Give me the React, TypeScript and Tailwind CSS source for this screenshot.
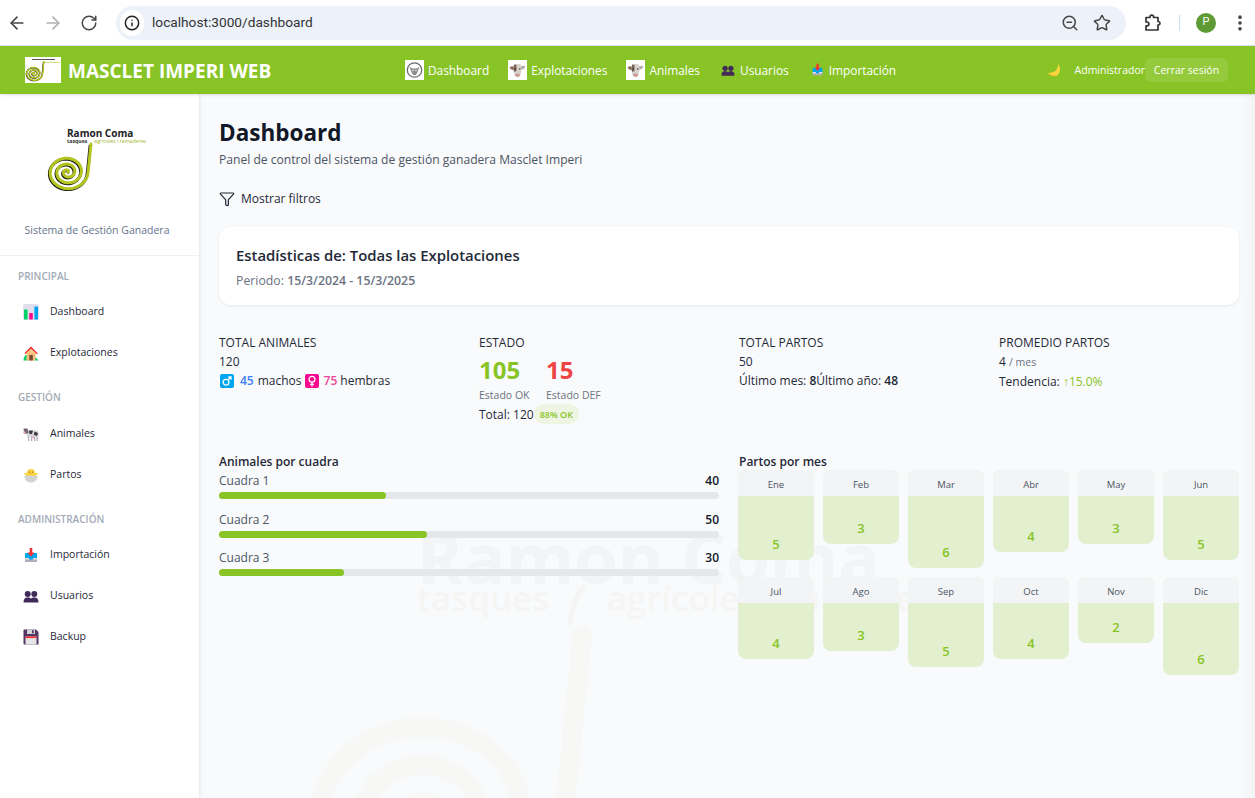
import { ArrowLeft, ArrowRight, EllipsisVertical, Funnel, Info, RotateCw, Star, ZoomOut } from "lucide-react";

const FONT = "font-['Open_Sans','Noto_Sans',sans-serif]";

const MONTHS = [
  { name: "Ene", value: 5 },
  { name: "Feb", value: 3 },
  { name: "Mar", value: 6 },
  { name: "Abr", value: 4 },
  { name: "May", value: 3 },
  { name: "Jun", value: 5 },
  { name: "Jul", value: 4 },
  { name: "Ago", value: 3 },
  { name: "Sep", value: 5 },
  { name: "Oct", value: 4 },
  { name: "Nov", value: 2 },
  { name: "Dic", value: 6 },
];

const CUADRAS = [
  { name: "Cuadra 1", value: 40 },
  { name: "Cuadra 2", value: 50 },
  { name: "Cuadra 3", value: 30 },
];

// spiral winding outwards, ends on the right side and runs up the stem
function spiralPath() {
  const points: string[] = [];
  for (let i = 0; i <= 150; i++) {
    const angle = (i / 150) * Math.PI * 6;
    const r = 0.6 + (i / 150) * 20;
    points.push(`${(21.5 + r * Math.cos(angle)).toFixed(2)} ${(31 - r * 0.88 * Math.sin(angle)).toFixed(2)}`);
  }
  return `M${points.join(" L")} C43 24 44 12 45 3`;
}

const SPIRAL = spiralPath();

function Spiral({ className, shadow, stroke = 3 }: { className: string; shadow?: boolean; stroke?: number }) {
  return (
    <svg viewBox="0 0 50 56" fill="none" className={className}>
      {shadow && <path d={SPIRAL} stroke="#1a1a14" strokeWidth={stroke} transform="translate(-0.8 0.9)" />}
      <path d={SPIRAL} stroke="#b4c522" strokeWidth={stroke} strokeLinecap="round" />
    </svg>
  );
}

function LogoSmall() {
  return (
    <div className="relative h-[26px] w-[36px] bg-white">
      <div className="absolute top-[2px] left-[7px] h-[1px] w-[23px] bg-[#555]" />
      <div className="absolute top-[5px] left-[18px] h-[1px] w-[17px] bg-[#d3dc80]" />
      <Spiral className="absolute top-[3px] left-0 h-[24px] w-[21px]" shadow stroke={3.4} />
    </div>
  );
}

function CowHead() {
  return (
    <svg viewBox="0 0 19 20" className="h-[20px] w-[19px] bg-white">
      <path d="M1.5 7.5 Q4 5.5 6 7 L6 10 Q3 10.5 1.5 7.5 Z" fill="#8a6f60" />
      <path d="M17.5 6.5 Q15 5 13 6.5 L13 9.5 Q16 10 17.5 6.5 Z" fill="#b5aca4" />
      <path d="M6 4.5 Q9.5 3 13 4.5 L13.5 10 L12.5 15 Q9.5 17.5 6.5 15 L5.5 10 Z" fill="#d9d3cc" />
      <path d="M6 4.5 L8.5 5 L8.5 11 L6.5 12 L5.5 10 Z" fill="#7a6558" />
      <path d="M7 14 Q9.5 12.8 12 14 L11.8 16 Q9.5 17.8 7.2 16 Z" fill="#c99d92" />
      <circle cx="7.2" cy="9" r="0.7" fill="#2a2220" />
      <circle cx="11.8" cy="9" r="0.7" fill="#2a2220" />
    </svg>
  );
}

function OxHead() {
  return (
    <svg viewBox="0 0 19 20" fill="none" className="h-[20px] w-[19px] bg-white">
      <circle cx="9.5" cy="10" r="7.2" stroke="#6b6b6b" strokeWidth="1.3" />
      <path d="M4.5 6.5 Q6 8.5 8 8.5 H11 Q13 8.5 14.5 6.5 L13 11 L11 15 H8 L6 11 Z" fill="#8a8a8a" />
      <circle cx="8" cy="10.5" r="0.8" fill="#fff" />
      <circle cx="11" cy="10.5" r="0.8" fill="#fff" />
    </svg>
  );
}

function BarsEmoji() {
  return (
    <svg viewBox="0 0 16 16" className="h-[16px] w-[16px]">
      <rect width="16" height="16" rx="2" fill="#e3deed" />
      <rect x="1" y="5.5" width="3.6" height="10" fill="#00d26a" />
      <rect x="6.2" y="9" width="3.6" height="6.5" fill="#f70a8d" />
      <rect x="11.4" y="2.5" width="3.6" height="13" fill="#00a6ed" />
    </svg>
  );
}

function HouseEmoji() {
  return (
    <svg viewBox="0 0 16 16" className="h-[16px] w-[16px]">
      <path d="M0.5 15.5 C0.5 12 2 10 3.5 9.5 L5 15.5 Z M11 15.5 L12.5 12 L15.5 15.5 Z" fill="#00d26a" />
      <rect x="3.5" y="7.5" width="9" height="8" fill="#f3c07b" />
      <path d="M8 1.5 L15 8.5 L13.5 9 L8 4 L2.5 9 L1.5 8 Z" fill="#f8312f" />
      <path d="M8 4 L12.5 8 H3.5 Z" fill="#ffc883" />
      <rect x="6.3" y="10" width="3.5" height="5.5" fill="#7d4533" />
    </svg>
  );
}

function CowEmoji() {
  return (
    <svg viewBox="0 0 16 16" className="h-[16px] w-[16px]">
      <path d="M4 4.5 H14 Q15.5 4.5 15.5 6.5 V11 H4 Z" fill="#d8d6da" />
      <path d="M6 4.5 H10 L9 8 H6.5 Z M11.5 5.5 L15 7 L14 10 L11 9 Z" fill="#3a3540" />
      <path d="M0.5 2.5 L4.5 2.5 L5.5 7 L2.5 8 L1 6 Z" fill="#6b6570" />
      <circle cx="1.5" cy="6.5" r="1.2" fill="#f4a0b5" />
      <path d="M5 11 H6.3 V15 H5 Z M8 11 H9.3 V15 H8 Z M11 11 H12.3 V15 H11 Z M13.5 11 H14.8 V15 H13.5 Z" fill="#b0adb4" />
      <circle cx="10" cy="11.6" r="1" fill="#f4a0b5" />
    </svg>
  );
}

function ChickEmoji() {
  return (
    <svg viewBox="0 0 16 16" className="h-[16px] w-[16px]">
      <path d="M0.5 6 L4 6 A4 4 0 0 1 12 6 L15.5 6 L12.5 9 H3.5 Z" fill="#fcd53f" />
      <path d="M1.5 9 L4 8 L6 9.5 L8 8 L10 9.5 L12 8 L14.5 9 C14.5 13 12 15.5 8 15.5 C4 15.5 1.5 13 1.5 9 Z" fill="#d3d3d3" />
      <circle cx="6.3" cy="5" r="0.6" fill="#402a32" />
      <circle cx="9.7" cy="5" r="0.6" fill="#402a32" />
      <path d="M7 6 H9 L8 7 Z" fill="#ff822d" />
    </svg>
  );
}

function TrayEmoji({ size = "h-[16px] w-[16px]" }: { size?: string }) {
  return (
    <svg viewBox="0 0 16 16" className={size}>
      <path d="M2 6 H14 V14 H2 Z" fill="#00a6ed" />
      <path d="M2 11 H5.5 L6.5 12.5 H9.5 L10.5 11 H14 V15 H2 Z" fill="#b4acbc" />
      <path d="M2 11 H5.5 L6.5 12.5 H9.5 L10.5 11 H14 V12.5 H2 Z" fill="#e6e6e6" />
      <path d="M6.7 1 H9.3 V5.5 H11.5 L8 9.5 L4.5 5.5 H6.7 Z" fill="#f8312f" />
    </svg>
  );
}

function BustsEmoji({ size = "h-[16px] w-[16px]" }: { size?: string }) {
  return (
    <svg viewBox="0 0 16 16" className={size} fill="#402a5a">
      <circle cx="4.7" cy="6" r="3" />
      <circle cx="11.3" cy="6" r="3" />
      <path d="M0.5 14.5 C0.5 11 2 9.5 4 9.5 H5.5 C6.8 9.5 7.5 10 8 10.8 C8.5 10 9.2 9.5 10.5 9.5 H12 C14 9.5 15.5 11 15.5 14.5 Z" />
    </svg>
  );
}

function FloppyEmoji() {
  return (
    <svg viewBox="0 0 16 16" className="h-[16px] w-[16px]">
      <path d="M1.5 0.5 H13 L15.5 3 V15.5 H1.5 Q0.5 15.5 0.5 14.5 V1.5 Q0.5 0.5 1.5 0.5 Z" fill="#533566" />
      <rect x="4" y="0.5" width="8" height="4.5" fill="#d3d3d3" />
      <rect x="9" y="1.3" width="1.7" height="3" fill="#533566" />
      <rect x="2.5" y="7.5" width="11" height="8" fill="#e6e6e6" />
      <rect x="2.5" y="7.5" width="11" height="1.6" fill="#f8312f" />
    </svg>
  );
}

function MoonEmoji() {
  return (
    <svg viewBox="0 0 14 14" className="h-[14px] w-[14px]">
      <path d="M11 1 C11.5 6 8 10 1 10 C3 13 7 14 10 12.5 C13.5 10.5 14 4 11 1 Z" fill="#fcd53f" />
      <path d="M1 10 C3 13 7 14 10 12.5 C7.5 12.8 4 12.5 1 10 Z" fill="#f9a825" />
    </svg>
  );
}

function MaleIcon() {
  return (
    <svg viewBox="0 0 14 14" fill="none" className="ml-[1px] h-[14px] w-[14px]">
      <rect width="14" height="14" rx="2" fill="#00a6ed" />
      <circle cx="6" cy="8.2" r="2.9" stroke="#fff" strokeWidth="1.3" />
      <path d="M8.2 5.8 L11 3 M8.3 3 H11 V5.7" stroke="#fff" strokeWidth="1.3" />
    </svg>
  );
}

function FemaleIcon() {
  return (
    <svg viewBox="0 0 14 14" fill="none" className="ml-[3px] h-[14px] w-[14px]">
      <rect width="14" height="14" rx="2" fill="#f70a8d" />
      <circle cx="7" cy="5.2" r="2.9" stroke="#fff" strokeWidth="1.3" />
      <path d="M7 8 V12.5 M5 10.4 H9" stroke="#fff" strokeWidth="1.3" />
    </svg>
  );
}

function ExtensionIcon() {
  return (
    <svg viewBox="0 0 18 18" fill="none" className="ml-[18px] h-[18px] w-[18px] text-[#333]">
      <path
        d="M2 3.5 H6 V3 A1.8 1.8 0 0 1 9.6 3 V3.5 H14 V7.5 H14.6 A1.8 1.8 0 0 1 14.6 11 H14 V16 H2 V11.8 H3 A1.9 1.9 0 0 0 3 8 H2 Z"
        stroke="currentColor"
        strokeWidth="1.7"
        strokeLinejoin="round"
      />
    </svg>
  );
}

function BrowserBar() {
  return (
    <div className="flex h-[46px] items-center border-b border-[#dfe3e8] bg-white text-[#474747]">
      <div className="ml-[7px] flex items-center gap-[16px]">
        <ArrowLeft className="h-[20px] w-[20px]" strokeWidth={2} />
        <ArrowRight className="h-[20px] w-[20px] text-[#b0b0b0]" strokeWidth={2} />
        <RotateCw className="ml-[1px] h-[18px] w-[18px]" strokeWidth={2} />
      </div>
      <div className="ml-[18px] flex h-[34px] w-[1010px] items-center rounded-full bg-[#edf2fa] pr-[15px] pl-[4px]">
        <div className="flex h-[26px] w-[24px] items-center justify-center rounded-full bg-white">
          <Info className="h-[16px] w-[16px] text-[#222]" strokeWidth={2.2} />
        </div>
        <span className="ml-[8px] font-['Roboto',sans-serif] text-[13.7px] text-[#333]">localhost:3000/dashboard</span>
        <ZoomOut className="ml-auto h-[18px] w-[18px]" strokeWidth={2} />
        <Star className="ml-[14px] h-[18px] w-[18px]" strokeWidth={2} />
      </div>
      <ExtensionIcon />
      <div className="ml-[17px] h-[16px] w-[1px] bg-[#c9dbf5]" />
      <div className="ml-[16px] flex h-[20px] w-[20px] items-center justify-center rounded-full bg-[#5f9b35] font-['Roboto',sans-serif] text-[11px] text-white">
        P
      </div>
      <EllipsisVertical className="ml-[14px] h-[20px] w-[20px] text-[#444]" strokeWidth={2.4} />
    </div>
  );
}

function TopBar() {
  return (
    <header className="z-10 flex h-[48px] items-center bg-[#88c425] pr-[27px] pl-[25px] text-white shadow-sm">
      <div className="flex w-[247px] items-center gap-[7px]">
        <LogoSmall />
        <span className="pt-[2px] text-[19px] leading-none font-bold whitespace-nowrap">MASCLET IMPERI WEB</span>
      </div>
      <nav className="ml-[133px] flex items-center gap-[19px] text-[11.85px]">
        <a className="flex items-center gap-[4px]"><OxHead /><span className="pt-[2px]">Dashboard</span></a>
        <a className="flex items-center gap-[4px]"><CowHead /><span className="pt-[2px]">Explotaciones</span></a>
        <a className="flex items-center gap-[4px]"><CowHead /><span className="pt-[2px]">Animales</span></a>
        <a className="ml-[2px] flex items-center gap-[5px]"><BustsEmoji size="h-[14px] w-[14px]" /><span className="pt-[2px]">Usuarios</span></a>
        <a className="ml-[3px] flex items-center gap-[5px]"><TrayEmoji size="h-[13px] w-[13px]" /><span className="pt-[2px]">Importación</span></a>
      </nav>
      <div className="ml-auto flex items-center text-[10.5px]">
        <MoonEmoji />
        <span className="ml-[14px] pt-[2px]">Administrador</span>
        <button className="flex h-[24px] w-[83px] items-center justify-center rounded-md bg-white/10 pt-[1px]">Cerrar sesión</button>
      </div>
    </header>
  );
}

function SideItem({ icon, label }: { icon: React.ReactNode; label: string }) {
  return (
    <a className="flex h-[41px] items-center pl-[23px] text-[10.5px] text-[#1f2937]">
      <span className="flex w-[27px]">{icon}</span>
      {label}
    </a>
  );
}

function SideTitle({ children, className }: { children: string; className: string }) {
  return <div className={`pl-[18px] text-[10px] leading-[14px] font-semibold text-[#a3aab5] ${className}`}>{children}</div>;
}

function Sidebar() {
  return (
    <aside className="z-[5] w-[199px] shrink-0 bg-white shadow-[1px_0_3px_rgba(0,0,0,0.08)]">
      <div className="h-[162px] border-b border-[#f0f1f3]">
        <div className="relative h-[124px]">
          <div className="absolute top-[34px] left-[67px] text-[10px] leading-none font-bold text-[#222]">Ramon Coma</div>
          <div className="absolute top-[45px] left-[67px] flex w-[84px] text-[5.2px] leading-none whitespace-nowrap">
            <span className="font-bold text-[#333]">tasques</span>
            <span className="ml-[7px] text-[#a8b52a]">agrícoles i ramaderes</span>
          </div>
          <Spiral className="absolute top-[47px] left-[46px] h-[56px] w-[50px]" shadow />
        </div>
        <p className="pr-[5px] text-center text-[10.5px] leading-[24px] text-[#64748b]">Sistema de Gestión Ganadera</p>
      </div>
      <SideTitle className="mt-[13px]">PRINCIPAL</SideTitle>
      <div className="mt-[8px]">
        <SideItem icon={<BarsEmoji />} label="Dashboard" />
        <SideItem icon={<HouseEmoji />} label="Explotaciones" />
      </div>
      <SideTitle className="mt-[17px]">GESTIÓN</SideTitle>
      <div className="mt-[9px]">
        <SideItem icon={<CowEmoji />} label="Animales" />
        <SideItem icon={<ChickEmoji />} label="Partos" />
      </div>
      <SideTitle className="mt-[17px]">ADMINISTRACIÓN</SideTitle>
      <div className="mt-[8px]">
        <SideItem icon={<TrayEmoji />} label="Importación" />
        <SideItem icon={<BustsEmoji />} label="Usuarios" />
        <SideItem icon={<FloppyEmoji />} label="Backup" />
      </div>
    </aside>
  );
}

function Watermark() {
  return (
    <div className="pointer-events-none absolute inset-0 overflow-hidden">
      <div className="absolute top-[428px] left-[218px] text-[70px] leading-[70px] font-bold whitespace-nowrap text-black opacity-[0.018]">Ramon Coma</div>
      <div className="absolute top-[482px] left-[218px] text-[35px] leading-[44px] font-semibold whitespace-nowrap text-[#8a9a10] opacity-[0.03]">
        tasques <span className="ml-[48px]">agrícoles i ramaderes</span>
      </div>
      <svg viewBox="0 0 30 50" fill="none" className="absolute top-[489px] left-[362px] h-[45px] w-[27px] opacity-[0.03]">
        <path d="M26 2 Q12 20 10 46" stroke="#8a9a10" strokeWidth="6" />
      </svg>
      <Spiral className="absolute top-[521px] left-[91px] h-[364px] w-[325px] opacity-[0.025]" />
    </div>
  );
}

function Stats() {
  return (
    <section className="mt-[28px] grid grid-cols-4 gap-x-[20px] text-[12px] leading-[19px] text-[#1f2937]">
      <div>
        <h3 className="text-[12px] leading-[19px] font-normal">TOTAL ANIMALES</h3>
        <p>120</p>
        <p className="flex items-center">
          <MaleIcon />
          <span className="ml-[6px] font-semibold text-[#3b82f6]">45</span>
          <span className="ml-[4px]">machos</span>
          <FemaleIcon />
          <span className="ml-[5px] font-semibold text-[#ec4899]">75</span>
          <span className="ml-[3px]">hembras</span>
        </p>
      </div>
      <div>
        <h3 className="text-[12px] leading-[19px] font-normal">ESTADO</h3>
        <div className="mt-[1px] flex">
          <div className="w-[67px]">
            <p className="text-[24px] leading-[34px] font-bold text-[#88c425]">105</p>
            <p className="mt-[1px] text-[10.5px] leading-[14px] text-[#6b7280]">Estado OK</p>
          </div>
          <div>
            <p className="text-[24px] leading-[34px] font-bold text-[#ef4444]">15</p>
            <p className="mt-[1px] text-[10.5px] leading-[14px] text-[#6b7280]">Estado DEF</p>
          </div>
        </div>
        <p className="mt-[2px] flex items-center">
          Total: 120
          <span className="flex h-[20px] items-center rounded-full bg-[#eef5e2] px-[6px] text-[9px] font-semibold text-[#88c425]">88% OK</span>
        </p>
      </div>
      <div>
        <h3 className="text-[12px] leading-[19px] font-normal">TOTAL PARTOS</h3>
        <p>50</p>
        <p>Último mes: <b className="font-semibold">8</b>Último año: <b className="font-semibold">48</b></p>
      </div>
      <div>
        <h3 className="text-[12px] leading-[19px] font-normal">PROMEDIO PARTOS</h3>
        <p>4 <span className="text-[10.5px] text-[#6b7280]">/ mes</span></p>
        <p>Tendencia: <span className="text-[#88c425]">↑15.0%</span></p>
      </div>
    </section>
  );
}

function CuadraBars() {
  return (
    <div>
      <h3 className="text-[12px] leading-[20px] font-semibold text-[#1f2937]">Animales por cuadra</h3>
      <div className="flex flex-col gap-[11.5px]">
        {CUADRAS.map((c) => (
          <div key={c.name}>
            <div className="flex justify-between text-[12px] leading-[18px]">
              <span className="text-[#4b5563]">{c.name}</span>
              <span className="font-semibold text-[#111827]">{c.value}</span>
            </div>
            <div className="mt-[2px] h-[7px] rounded-full bg-[#e5e7eb]">
              <div className="h-full rounded-full bg-[#88c425]" style={{ width: `${(c.value / 120) * 100}%` }} />
            </div>
          </div>
        ))}
      </div>
    </div>
  );
}

function MonthGrid() {
  return (
    <div>
      <h3 className="-mb-[2px] text-[12px] leading-[20px] font-semibold text-[#1f2937]">Partos por mes</h3>
      <div className="-ml-[1px] grid grid-cols-6 items-start gap-x-[9px] gap-y-[9px]">
        {MONTHS.map((m) => (
          <div key={m.name} className="flex flex-col overflow-hidden rounded-lg bg-[#e2f0d0]" style={{ height: 50 + m.value * 8 }}>
            <div className="h-[26px] overflow-hidden bg-[#f3f4f6] text-center text-[9.5px] leading-[29px] text-[#4b5563]">{m.name}</div>
            <div className="mt-auto pb-[6px] text-center text-[13px] leading-[20px] font-semibold text-[#88c425]">{m.value}</div>
          </div>
        ))}
      </div>
    </div>
  );
}

export default function App() {
  return (
    <div className={`flex h-screen flex-col overflow-hidden bg-white ${FONT}`}>
      <BrowserBar />
      <TopBar />
      <div className="flex min-h-0 flex-1">
        <Sidebar />
        <main className="relative flex-1 bg-[#f9fafc] pt-[22px] pr-[16px] pl-[20px]">
          <Watermark />
          <div className="pointer-events-none absolute top-0 right-0 bottom-0 w-[15px] bg-gradient-to-r from-transparent to-[#f3f4f6]" />
          <div className="relative">
            <h1 className="text-[22.5px] leading-[34px] font-bold text-[#111827]">Dashboard</h1>
            <p className="text-[12.1px] leading-[20px] text-[#4b5563]">Panel de control del sistema de gestión ganadera Masclet Imperi</p>
            <button className="mt-[19px] flex h-[20px] items-center gap-[6px] text-[12px] text-[#1f2937]">
              <Funnel className="h-[16px] w-[16px]" strokeWidth={1.8} />
              Mostrar filtros
            </button>
            <div className="mt-[18px] h-[78px] rounded-xl bg-white px-[17px] pt-[17px] shadow-[0_1px_3px_rgba(0,0,0,0.08)]">
              <h2 className="text-[14.9px] leading-[22px] font-semibold text-[#1f2937]">Estadísticas de: Todas las Explotaciones</h2>
              <p className="mt-[6px] text-[12.3px] leading-[18px] text-[#6b7280]">Periodo: <span className="font-semibold">15/3/2024 - 15/3/2025</span></p>
            </div>
            <Stats />
            <div className="mt-[28px] grid grid-cols-2 gap-x-[20px]">
              <CuadraBars />
              <MonthGrid />
            </div>
          </div>
        </main>
      </div>
    </div>
  );
}
